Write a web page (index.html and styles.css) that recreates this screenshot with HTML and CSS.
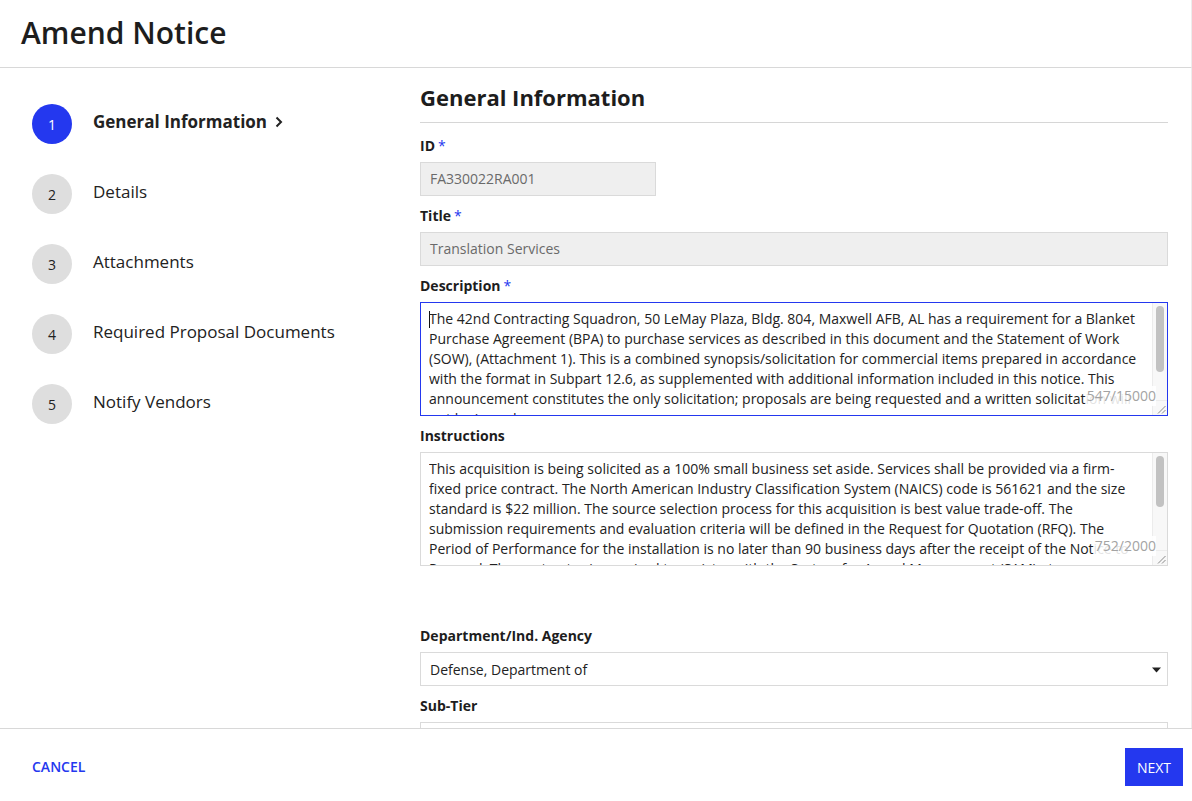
FILE: index.html
```html
<!DOCTYPE html>
<html lang="en">
<head>
<meta charset="utf-8">
<title>Amend Notice</title>
<link rel="stylesheet" href="styles.css">
</head>
<body>
<header class="app-header">
  <h1 class="app-title">Amend Notice</h1>
</header>
<div class="main">
  <nav class="steps">
    <div class="step active">
      <span class="step-num">1</span>
      <span class="step-label">General Information</span>
      <svg class="chevron" width="8" height="12" viewBox="0 0 8 12"><path d="M1.5 1.5 L6 6 L1.5 10.5" fill="none" stroke="#222" stroke-width="2"/></svg>
    </div>
    <div class="step"><span class="step-num">2</span><span class="step-label">Details</span></div>
    <div class="step"><span class="step-num">3</span><span class="step-label">Attachments</span></div>
    <div class="step"><span class="step-num">4</span><span class="step-label">Required Proposal Documents</span></div>
    <div class="step"><span class="step-num">5</span><span class="step-label">Notify Vendors</span></div>
  </nav>
  <section class="content">
    <h2 class="section-title">General Information</h2>

    <div class="field first">
      <div class="label">ID<span class="req">*</span></div>
      <div class="input readonly short">FA330022RA001</div>
    </div>

    <div class="field">
      <div class="label">Title<span class="req">*</span></div>
      <div class="input readonly">Translation Services</div>
    </div>

    <div class="field">
      <div class="label">Description<span class="req">*</span></div>
      <div class="textarea focused">
        <div class="ta-text">
          <div class="ta-line"><span class="caret"></span>The 42nd Contracting Squadron, 50 LeMay Plaza, Bldg. 804, Maxwell AFB, AL has a requirement for a Blanket</div>
          <div class="ta-line">Purchase Agreement (BPA) to purchase services as described in this document and the Statement of Work</div>
          <div class="ta-line">(SOW), (Attachment 1). This is a combined synopsis/solicitation for commercial items prepared in accordance</div>
          <div class="ta-line">with the format in Subpart 12.6, as supplemented with additional information included in this notice. This</div>
          <div class="ta-line">announcement constitutes the only solicitation; proposals are being requested and a written solicitation will</div>
          <div class="ta-line">not be issued.</div>
        </div>
        <div class="ta-track"><div class="ta-thumb tall"></div></div>
        <div class="ta-corner"><svg width="9" height="9" viewBox="0 0 9 9"><path d="M8.5 1 L1 8.5 M8.5 5 L5 8.5" stroke="#8a8a8a" stroke-width="1" fill="none"/></svg></div>
        <div class="ta-count">547/15000</div>
      </div>
    </div>

    <div class="field">
      <div class="label">Instructions</div>
      <div class="textarea">
        <div class="ta-text">
          <div class="ta-line">This acquisition is being solicited as a 100% small business set aside. Services shall be provided via a firm-</div>
          <div class="ta-line">fixed price contract. The North American Industry Classification System (NAICS) code is 561621 and the size</div>
          <div class="ta-line">standard is $22 million. The source selection process for this acquisition is best value trade-off. The</div>
          <div class="ta-line">submission requirements and evaluation criteria will be defined in the Request for Quotation (RFQ). The</div>
          <div class="ta-line">Period of Performance for the installation is no later than 90 business days after the receipt of the Notice to</div>
          <div class="ta-line">Proceed. The contractor is required to register with the System for Award Management (SAM) at</div>
        </div>
        <div class="ta-track"><div class="ta-thumb"></div></div>
        <div class="ta-corner"><svg width="9" height="9" viewBox="0 0 9 9"><path d="M8.5 1 L1 8.5 M8.5 5 L5 8.5" stroke="#8a8a8a" stroke-width="1" fill="none"/></svg></div>
        <div class="ta-count">752/2000</div>
      </div>
    </div>

    <div class="field spaced">
      <div class="label">Department/Ind. Agency</div>
      <div class="select">
        <span>Defense, Department of</span>
        <svg class="select-caret" width="9" height="6" viewBox="0 0 9 6"><path d="M0 0.5 H9 L4.5 5.5 Z" fill="#222"/></svg>
      </div>
    </div>

    <div class="field">
      <div class="label">Sub-Tier</div>
      <div class="select"><span></span></div>
    </div>
  </section>
</div>
<footer class="app-footer">
  <a class="btn-link">CANCEL</a>
  <button class="btn-primary">NEXT</button>
</footer>
</body>
</html>
```

FILE: styles.css
```css
* { box-sizing: border-box; }

html, body {
  margin: 0;
  height: 100%;
}

body {
  display: flex;
  flex-direction: column;
  overflow: hidden;
  font-family: "Open Sans", "Liberation Sans", sans-serif;
  color: #222;
  background: #fff;
}

.app-header {
  flex: 0 0 68px;
  display: flex;
  align-items: center;
  padding-left: 21px;
  padding-bottom: 1px;
  border-bottom: 1px solid #d8d8d8;
  border-right: 1px solid #ededed;
}

.app-title {
  margin: 0;
  font-size: 30px;
  font-weight: 600;
  color: #1d1d1d;
  line-height: 40px;
}

.main {
  flex: 1 1 auto;
  min-height: 0;
  display: flex;
  overflow: hidden;
  border-right: 1px solid #ededed;
}

.steps {
  flex: 0 0 420px;
  padding: 36px 0 0 32px;
}

.step {
  display: flex;
  align-items: center;
  height: 40px;
  margin-bottom: 30px;
}

.step-num {
  flex: 0 0 40px;
  width: 40px;
  height: 40px;
  border-radius: 50%;
  background: #dedede;
  color: #222;
  font-size: 14px;
  display: flex;
  align-items: center;
  justify-content: center;
  margin-right: 21px;
  padding-top: 1px;
}

.step-label {
  font-size: 17px;
  color: #222;
  padding-bottom: 5px;
}

.step.active .step-num {
  background: #2438ef;
  color: #fff;
}

.step.active .step-label {
  font-weight: 700;
}

.chevron {
  margin-left: 8px;
  margin-bottom: 4px;
}

.content {
  flex: 1 1 auto;
  padding: 14px 23px 0 0;
  min-width: 0;
}

.section-title {
  margin: 0;
  font-size: 22px;
  font-weight: 700;
  line-height: 30px;
  color: #1d1d1d;
  padding-bottom: 10px;
  border-bottom: 1px solid #d6d6d6;
}

.field {
  margin-top: 10px;
}

.field.first {
  margin-top: 13px;
}

.field.spaced {
  margin-top: 60px;
}

.label {
  font-size: 14px;
  font-weight: 700;
  line-height: 20px;
  margin-bottom: 6px;
  color: #1d1d1d;
}

.req {
  color: #2438ef;
  font-weight: 400;
  margin-left: 3px;
}

.input {
  height: 34px;
  border: 1px solid #dadada;
  padding: 0 9px;
  font-size: 14px;
  line-height: 32px;
  color: #222;
  background: #fff;
}

.input.readonly {
  background: #efefef;
  color: #6a6a6a;
}

.input.short {
  width: 236px;
}

.textarea {
  position: relative;
  height: 114px;
  border: 1px solid #dadada;
  overflow: hidden;
  background: #fff;
}

.textarea.focused {
  border-color: #2438ef;
}

.ta-text {
  padding: 6px 24px 0 8px;
  font-size: 14px;
  line-height: 20px;
  color: #222;
}

.ta-line {
  white-space: nowrap;
  overflow: hidden;
}

.caret {
  display: inline-block;
  width: 0;
  height: 17px;
  border-left: 1px solid #111;
  vertical-align: -4px;
  margin-right: -1px;
}

.ta-track {
  position: absolute;
  top: 0;
  right: 0;
  bottom: 15px;
  width: 15px;
  background: #f8f8f8;
  border-left: 1px solid #ececec;
}

.ta-thumb {
  position: absolute;
  top: 3px;
  left: 3px;
  width: 8px;
  height: 51px;
  border-radius: 4px;
  background: #c2c2c2;
}

.ta-thumb.tall {
  height: 66px;
}

.ta-corner {
  position: absolute;
  right: 0;
  bottom: 0;
  width: 15px;
  height: 15px;
  background: #f8f8f8;
  border-left: 1px solid #ececec;
  border-top: 1px solid #ececec;
  display: flex;
  align-items: flex-end;
  justify-content: flex-end;
  padding: 0 1px 1px 0;
}

.ta-count {
  position: absolute;
  right: 11px;
  bottom: 9px;
  font-size: 14px;
  line-height: 20px;
  color: #a3a3a3;
  background: rgba(255, 255, 255, 0.88);
  padding-left: 1px;
}

.select {
  height: 34px;
  border: 1px solid #dadada;
  background: #fff;
  display: flex;
  align-items: center;
  justify-content: space-between;
  padding: 0 6px 0 9px;
  font-size: 14px;
  color: #222;
}

.select-caret {
  margin-top: 1px;
}

.app-footer {
  flex: 0 0 73px;
  border-top: 1px solid #d8d8d8;
  display: flex;
  align-items: center;
  justify-content: space-between;
  padding: 4px 9px 0 32px;
}

.btn-link {
  color: #2438ef;
  font-size: 14px;
  font-weight: 600;
  cursor: pointer;
  margin-top: -2px;
}

.btn-primary {
  width: 58px;
  height: 38px;
  border: 0;
  background: #2438ef;
  color: #fff;
  font-family: "Open Sans", "Liberation Sans", sans-serif;
  font-size: 14px;
  padding: 0;
  cursor: pointer;
}
```
